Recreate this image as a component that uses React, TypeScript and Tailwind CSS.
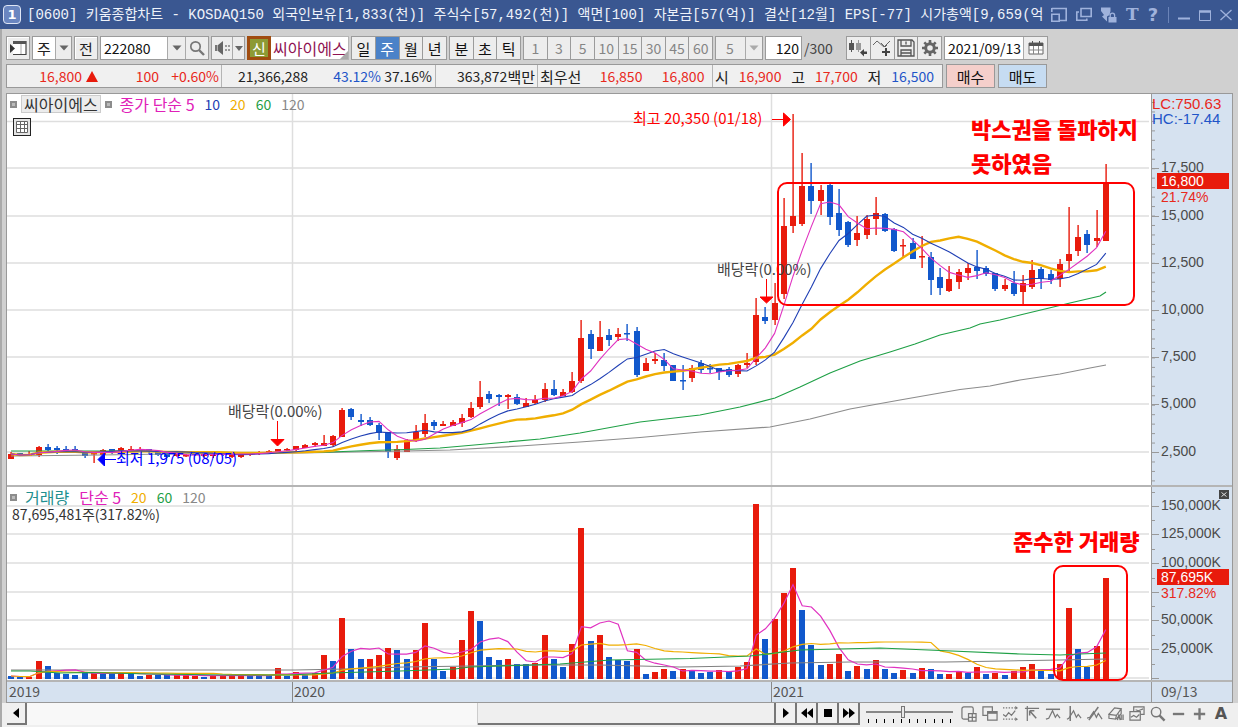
import React from "react";

type Tone = "r" | "b";
type Candle = [Tone, number, number, number, number];
type Bar = [Tone, number];

/* tone, high, body top, body bottom, low */
const candles: Candle[] = [
  ["r", 452, 454, 459, 459], ["b", 453, 453, 456, 456], ["r", 451, 454, 456, 456], ["r", 446, 447, 455, 457],
  ["b", 444, 447, 450, 452], ["b", 446, 448, 450, 454], ["b", 446, 449, 451, 452], ["b", 446, 449, 452, 453],
  ["b", 451, 451, 456, 458], ["r", 451, 453, 454, 463], ["r", 449, 450, 455, 455], ["b", 449, 449, 451, 454],
  ["r", 447, 448, 451, 452], ["r", 446, 449, 451, 452], ["r", 447, 449, 451, 452], ["b", 449, 449, 452, 454],
  ["b", 451, 451, 455, 456], ["b", 453, 453, 457, 458], ["r", 453, 454, 456, 457], ["r", 454, 455, 456, 457],
  ["b", 452, 453, 455, 456], ["r", 452, 453, 456, 457], ["r", 453, 454, 456, 458], ["b", 452, 453, 455, 456],
  ["r", 453, 454, 457, 458], ["r", 453, 454, 457, 458], ["r", 452, 453, 455, 456], ["r", 451, 452, 454, 455],
  ["r", 450, 451, 453, 454], ["r", 449, 449, 453, 453], ["r", 448, 449, 450, 451], ["r", 446, 446, 450, 452],
  ["r", 444, 445, 448, 448], ["r", 442, 443, 445, 447], ["r", 435, 443, 446, 446], ["r", 435, 436, 445, 447],
  ["r", 408, 410, 437, 437], ["b", 408, 409, 417, 420], ["b", 414, 420, 422, 426], ["b", 417, 420, 425, 426],
  ["b", 423, 425, 433, 440], ["b", 432, 432, 452, 458], ["r", 445, 449, 458, 460], ["r", 439, 440, 452, 452],
  ["r", 425, 432, 441, 442], ["r", 414, 423, 434, 437], ["b", 420, 422, 426, 430], ["r", 421, 424, 426, 426],
  ["r", 420, 422, 426, 426], ["r", 414, 418, 423, 427], ["r", 402, 408, 417, 418], ["r", 381, 397, 407, 409],
  ["b", 391, 394, 399, 403], ["b", 394, 395, 397, 406], ["r", 394, 395, 397, 409], ["b", 394, 397, 404, 405],
  ["r", 398, 403, 407, 407], ["r", 395, 400, 403, 404], ["r", 383, 389, 400, 402], ["b", 380, 389, 395, 396],
  ["r", 389, 392, 396, 396], ["r", 372, 381, 392, 393], ["r", 320, 338, 381, 383], ["b", 330, 334, 349, 359],
  ["r", 321, 337, 351, 351], ["b", 329, 335, 340, 346], ["r", 328, 334, 337, 341], ["b", 324, 333, 334, 341],
  ["b", 327, 331, 375, 377], ["r", 358, 363, 371, 371], ["r", 353, 359, 361, 364], ["b", 353, 360, 366, 371],
  ["b", 365, 365, 381, 381], ["b", 365, 380, 381, 390], ["r", 365, 368, 378, 382], ["b", 360, 363, 370, 373],
  ["b", 364, 368, 369, 373], ["b", 368, 368, 372, 380], ["b", 367, 369, 375, 377], ["r", 364, 365, 374, 377],
  ["r", 353, 363, 365, 368], ["r", 298, 315, 362, 365], ["b", 307, 317, 321, 324], ["r", 283, 303, 320, 325],
  ["r", 198, 226, 294, 299], ["r", 114, 216, 226, 233], ["r", 153, 186, 224, 226], ["b", 163, 186, 201, 214],
  ["r", 185, 190, 201, 215], ["b", 184, 185, 217, 225], ["b", 189, 213, 230, 236], ["b", 221, 222, 245, 247],
  ["r", 216, 233, 240, 246], ["r", 215, 219, 235, 239], ["r", 197, 213, 219, 235], ["b", 213, 214, 231, 232],
  ["b", 228, 229, 251, 252], ["r", 239, 245, 246, 258], ["b", 238, 243, 259, 259], ["r", 236, 256, 257, 268],
  ["b", 252, 257, 280, 295], ["b", 268, 277, 288, 295], ["r", 266, 279, 291, 292], ["r", 269, 272, 282, 289],
  ["r", 263, 268, 273, 280], ["b", 250, 267, 271, 279], ["b", 266, 268, 274, 276], ["b", 273, 273, 289, 291],
  ["r", 279, 285, 289, 291], ["b", 271, 283, 294, 296], ["r", 275, 283, 292, 304], ["r", 260, 270, 287, 289],
  ["b", 267, 269, 279, 289], ["b", 270, 274, 280, 284], ["r", 259, 264, 279, 287], ["r", 207, 254, 261, 272],
  ["r", 225, 237, 251, 256], ["b", 230, 234, 245, 253], ["r", 210, 238, 241, 247], ["r", 164, 182, 241, 241],
];

const bars: Bar[] = [
  ["b", 676], ["b", 677], ["r", 677], ["r", 661], ["b", 666], ["b", 673], ["b", 674], ["b", 675], ["b", 673], ["r", 672],
  ["b", 673], ["b", 674], ["r", 672], ["b", 673], ["b", 676], ["r", 675], ["b", 675], ["b", 675], ["r", 675], ["r", 675],
  ["r", 676], ["b", 677], ["r", 675], ["r", 675], ["r", 675], ["r", 676], ["b", 676], ["b", 676], ["b", 675], ["r", 668],
  ["b", 676], ["r", 672], ["b", 675], ["r", 673], ["r", 655], ["b", 661], ["r", 618], ["b", 649], ["b", 659], ["r", 659],
  ["r", 655], ["r", 648], ["b", 650], ["b", 659], ["r", 650], ["r", 623], ["b", 659], ["b", 671], ["r", 667], ["r", 640],
  ["r", 611], ["b", 621], ["b", 657], ["b", 660], ["r", 659], ["b", 664], ["b", 664], ["r", 663], ["r", 635], ["b", 659],
  ["b", 667], ["r", 644], ["r", 528], ["b", 641], ["r", 635], ["b", 657], ["b", 660], ["b", 661], ["r", 649], ["b", 674],
  ["r", 672], ["r", 669], ["b", 671], ["r", 669], ["b", 671], ["b", 673], ["b", 672], ["r", 670], ["b", 672], ["r", 667],
  ["r", 662], ["r", 504], ["b", 639], ["r", 619], ["r", 593], ["r", 568], ["b", 610], ["b", 645], ["b", 665], ["r", 664],
  ["r", 654], ["b", 671], ["r", 666], ["b", 669], ["r", 660], ["b", 669], ["b", 673], ["r", 670], ["b", 673], ["r", 668],
  ["b", 669], ["b", 674], ["r", 674], ["r", 672], ["b", 673], ["r", 667], ["b", 674], ["r", 673], ["b", 675], ["r", 671],
  ["r", 667], ["r", 664], ["b", 671], ["b", 674], ["r", 664], ["r", 608], ["b", 649], ["b", 667], ["r", 646], ["r", 578],
];

const STEP = 9.2;
const xAt = (i: number) => 11 + STEP * i;
const fillOf = (t: Tone) => (t === "r" ? "#e81b0c" : "#1158cc");

function average(values: number[], n: number) {
  return values
    .map((_, i) => {
      const part = values.slice(Math.max(0, i - n + 1), i + 1);
      const mean = part.reduce((a, b) => a + b, 0) / part.length;
      return `${xAt(i).toFixed(1)},${mean.toFixed(1)}`;
    })
    .join(" ");
}

const closes = candles.map(([t, , top, bottom]) => (t === "r" ? top : bottom));
const volumes = bars.map(([, top]) => top);

const priceTicks: [number, string][] = [
  [168, "17,500"], [216, "15,000"], [263, "12,500"], [310, "10,000"], [357, "7,500"], [404, "5,000"], [452, "2,500"],
];
const volumeTicks: [number, string][] = [
  [506, "150,000K"], [534, "125,000K"], [563, "100,000K"], [592, ""], [620, "50,000K"], [649, "25,000K"], [678, ""],
];

const UI = "font-['Noto_Sans_CJK_KR',sans-serif]";
const btn =
  "flex h-6 items-center justify-center border border-[#9b9b9b] bg-[#ededed] text-[15px] leading-none text-[#222] shadow-[inset_1px_1px_0_#fff]";

function Down({ dim = false }: { dim?: boolean }) {
  return (
    <svg viewBox="0 0 10 6" className={dim ? "h-1.5 w-2.5 fill-[#aaa]" : "h-1.5 w-2.5 fill-[#666]"} aria-hidden="true">
      <path d="M0.5 0.5h9L5 5.5z" />
    </svg>
  );
}

function Mark() {
  return <span className="block size-[7px] border-2 border-[#8c8c8c] bg-[#bbb]" />;
}

function TitleBar() {
  return (
    <header className="flex h-[29px] items-center bg-[#3a5791] pl-[3px] pr-1.5 text-[#eef2fa]">
      <span className="flex h-[19px] w-[18px] shrink-0 items-center justify-center rounded border border-[#dfe6f5] bg-[#6a86c0] font-['DejaVu_Sans',sans-serif] text-[13px] font-bold text-white">
        1
      </span>
      <h1 className="ml-1.5 min-w-0 flex-1 overflow-hidden whitespace-pre font-['Liberation_Mono','Noto_Sans_CJK_KR',monospace] text-sm leading-5">
        [0600] 키움종합차트 - KOSDAQ150 외국인보유[1,833(천)] 주식수[57,492(천)] 액면[100] 자본금[57(억)] 결산[12월] EPS[-77] 시가총액[9,659(억
      </h1>
      <div className="ml-1 flex shrink-0 items-center gap-[9px] text-[#9fb2dc]">
        <button aria-label="창 크기" className="size-4">
          <svg viewBox="0 0 16 16" fill="none" stroke="currentColor" strokeWidth="1.6"><path d="M.8 1.5h14.4v12H8.5M.8 1v4M.8 7.3h7.4v6.9H.8z" /></svg>
        </button>
        <button aria-label="창 복사" className="size-4">
          <svg viewBox="0 0 16 16" fill="none" stroke="currentColor" strokeWidth="1.6"><path d="M5 1.5h10.2v8H5zM3 5H.8v8.2h10v-1.8" /></svg>
        </button>
        <button aria-label="고정" className="size-4">
          <svg viewBox="0 0 16 16" fill="currentColor"><path d="M0 .5h9.500v3.500l-1 4L6 9.500v5L1 9.500l2-1.500L0 4z" /><path d="M7.500 10h8v5.500h-8z" /><path d="M9.200 10V8.300a2.200 2.200 0 0 1 4.400 0V10" fill="none" stroke="currentColor" strokeWidth="1.300" /></svg>
        </button>
        <button aria-label="글꼴" className="w-3 font-['DejaVu_Serif',serif] text-[17px] font-bold leading-none">T</button>
        <button aria-label="도움말" className="w-3 font-['DejaVu_Sans',sans-serif] text-lg font-bold leading-none">?</button>
        <span className="h-4 w-px bg-[#6b84b8]" />
        <button aria-label="최소화" className="size-3">
          <svg viewBox="0 0 12 12" fill="currentColor"><path d="M0 8.500h12v2H0z" /></svg>
        </button>
        <button aria-label="최대화" className="size-3">
          <svg viewBox="0 0 12 12" fill="none" stroke="currentColor"><path d="M.5 2.500h11v9H.5z" /><path d="M0 2.500h12" strokeWidth="2.500" /></svg>
        </button>
        <button aria-label="닫기" className="size-3">
          <svg viewBox="0 0 12 12" fill="none" stroke="currentColor" strokeWidth="1.300"><path d="M.5 1l11 10M11.500 1L.5 11" /></svg>
        </button>
      </div>
    </header>
  );
}

function Toolbar() {
  const periods = ["일", "주", "월", "년"];
  return (
    <div className="flex items-center gap-0.5">
      <button className={`${btn} w-6`} aria-label="패널">
        <svg viewBox="0 0 18 16" className="h-4 w-[18px]"><path d="M4 1.500h13v13H4" fill="#fff" stroke="#444" strokeWidth="1.200" /><path d="M4 1h13v3H4z" fill="#555" /><path d="M12 4v10" stroke="#aaa" /><path d="M1 4v9l5-4.500z" fill="#333" /></svg>
      </button>
      <label className="relative flex h-6 w-10 border border-[#9b9b9b] bg-white">
        <select aria-label="주기" className="h-full w-full appearance-none bg-transparent pl-1 text-[15px] leading-none text-[#222]">
          <option>주</option>
        </select>
        <span className="pointer-events-none absolute inset-y-0 right-0 flex w-4 items-center justify-center border-l border-[#aaa] bg-[#ededed]"><Down /></span>
      </label>
      <button className={`${btn} w-6`}>전</button>
      <div className="flex h-6 w-[109px] border border-[#9b9b9b] bg-white">
        <input aria-label="종목코드" defaultValue="222080" className="w-[66px] min-w-0 bg-transparent px-[3px] text-sm leading-none text-[#111]" />
        <button aria-label="종목 목록" className="flex w-[18px] items-center justify-center border-l border-[#aaa] bg-[#ededed]"><Down /></button>
        <button aria-label="검색" className="flex flex-1 items-center justify-center border-l border-[#aaa] bg-[#ededed]">
          <svg viewBox="0 0 16 16" className="size-4" fill="none" stroke="#777"><circle cx="6.500" cy="6.500" r="4.700" strokeWidth="1.700" /><path d="M10 10l5 5" strokeWidth="2.400" /></svg>
        </button>
      </div>
      <div className="flex h-6 w-[34px] border border-[#9b9b9b] bg-[#ededed]">
        <button aria-label="소리" className="flex flex-1 items-center justify-center">
          <svg viewBox="0 0 17 16" className="h-4 w-[17px]"><path d="M1 5h2.500v6H1z" fill="#777" /><path d="M4 5l5-4v14l-5-4z" fill="#666" /><path d="M11 5h2v2h-2zM14 5h2v2h-2zM11 9h2v2h-2zM14 9h2v2h-2z" fill="#999" /></svg>
        </button>
        <button aria-label="소리 설정" className="flex w-3 items-center justify-center border-l border-[#aaa]">
          <svg viewBox="0 0 8 5" className="h-[5px] w-2 fill-[#666]"><path d="M0 0h8L4 5z" /></svg>
        </button>
      </div>
      <div className="flex h-6 w-[102px] bg-white">
        <span className="flex w-6 items-center justify-center border-[3px] border-[#a04c10] bg-[#8d9a35] text-[15px] leading-none text-white">신</span>
        <span className="relative flex flex-1 items-center whitespace-nowrap border-y border-r border-[#b5b5b5] pl-0.5 text-[16px] leading-none text-[#8f1352]">
          씨아이에스
          <svg viewBox="0 0 8 8" className="absolute bottom-0 right-0 size-2 fill-[#aaa]"><path d="M8 0v8H0z" /></svg>
        </span>
      </div>
      <div className="flex w-24 divide-x divide-[#9b9b9b] border border-[#9b9b9b] bg-[#ededed]">
        {periods.map((p) => (
          <button
            key={p}
            className={p === "주" ? "h-[22px] flex-1 bg-[#4b82c8] text-[15px] leading-none text-white" : "h-[22px] flex-1 text-[15px] leading-none text-[#111]"}
          >
            {p}
          </button>
        ))}
      </div>
      <div className="flex w-[72px] divide-x divide-[#9b9b9b] border border-[#9b9b9b] bg-[#ededed]">
        {["분", "초", "틱"].map((p) => (
          <button key={p} className="h-[22px] flex-1 text-[15px] leading-none text-[#111]">{p}</button>
        ))}
      </div>
      <div className="flex w-[190px] divide-x divide-[#9b9b9b] border border-[#9b9b9b] bg-[#ededed]">
        {["1", "3", "5", "10", "15", "30", "45", "60"].map((p) => (
          <button key={p} className="h-[22px] flex-1 text-sm leading-none text-[#858585]">{p}</button>
        ))}
      </div>
      <label className="relative flex h-6 w-12 border border-[#9b9b9b] bg-[#ededed]">
        <select aria-label="분 단위" className="h-full w-full appearance-none bg-transparent pl-2.5 text-sm leading-none text-[#858585]">
          <option>5</option>
        </select>
        <span className="pointer-events-none absolute inset-y-0 right-0 flex w-[17px] items-center justify-center border-l border-[#aaa]"><Down dim /></span>
      </label>
      <input aria-label="봉 개수" defaultValue="120" className="h-6 w-[37px] border border-[#9b9b9b] bg-white px-0.5 text-right text-sm leading-none text-[#111]" />
      <span className="w-10 text-sm leading-none text-[#444]">/300</span>
      <div className="flex w-24 divide-x divide-[#9b9b9b] border border-[#9b9b9b] bg-[#ededed]">
        <button aria-label="차트 종류" className="flex h-[22px] flex-1 items-center justify-center">
          <svg viewBox="0 0 20 18" className="h-[18px] w-5"><path d="M1 4h5v7H1zM3 1h1v12H3z" fill="#555" /><path d="M8 4h5v7H8zM10 1h1v12h-1z" fill="#999" /><path d="M12 13.500l4-3.500v2.500h3v2.500h-3V17.500z" fill="#444" /></svg>
        </button>
        <button aria-label="지표 추가" className="flex h-[22px] flex-1 items-center justify-center">
          <svg viewBox="0 0 20 18" className="h-[18px] w-5"><path d="M1 6l4-4 7 6 6-6M9 4l4 4 2-2" fill="none" stroke="#666" /><path d="M13 9h2v3h3v2h-3v3h-2v-3h-3v-2h3z" fill="#444" /></svg>
        </button>
        <button aria-label="저장" className="flex h-[22px] flex-1 items-center justify-center">
          <svg viewBox="0 0 18 18" className="size-[18px]" fill="none" stroke="#555" strokeWidth="1.300"><path d="M1 1h14l2 2v14H1z" /><path d="M4 1v6h10V1M9 2.500v3M4 17v-6h10v6M4 14h10" /></svg>
        </button>
        <button aria-label="설정" className="flex h-[22px] flex-1 items-center justify-center">
          <svg viewBox="0 0 16 16" className="size-4"><circle cx="8" cy="8" r="4.300" fill="none" stroke="#666" strokeWidth="3" /><path d="M8 0v3M8 13v3M0 8h3M13 8h3M2.300 2.300l2 2M11.700 11.700l2 2M13.700 2.300l-2 2M4.300 11.700l-2 2" stroke="#666" strokeWidth="2.600" /></svg>
        </button>
      </div>
      <div className="flex h-6 w-[104px] border border-[#9b9b9b] bg-white">
        <input aria-label="기준일" defaultValue="2021/09/13" className="min-w-0 flex-1 bg-transparent pl-[3px] text-sm leading-none text-[#111]" />
        <button aria-label="달력" className="flex w-6 items-center justify-center border-l border-[#aaa] bg-[#ededed]">
          <svg viewBox="0 0 16 14" className="h-3.5 w-4"><path d="M1 2h14v11H1z" fill="#fff" stroke="#666" /><path d="M1 2h14v3H1zM4 0h1v3H4zM11 0h1v3h-1z" fill="#555" /><path d="M1 9h14M5.500 5v8M10.500 5v8" stroke="#888" /></svg>
        </button>
      </div>
    </div>
  );
}

function Quote() {
  const num = "text-sm leading-none text-right";
  return (
    <div className="flex h-6 gap-[3px] whitespace-nowrap leading-none">
      <div className="flex w-[937px] divide-x divide-[#b5b5b5] border border-[#999] bg-[#f0f0f0] text-[15px] leading-none text-[#222]">
        <div className="flex w-[215px] items-center text-[#e8291c]">
          <span className={`${num} w-[75px]`}>16,800</span>
          <svg viewBox="0 0 12 11" className="ml-1 h-[11px] w-3 fill-[#e81b0c]"><path d="M6 0l6 11H0z" /></svg>
          <span className={`${num} w-[61px]`}>100</span>
          <span className={`${num} w-[60px]`}>+0.60%</span>
        </div>
        <div className="flex w-[214px] items-center">
          <span className={`${num} w-[86px]`}>21,366,288</span>
          <span className={`${num} w-[73px] text-[#1f55c8]`}>43.12%</span>
          <span className={`${num} w-[51px]`}>37.16%</span>
        </div>
        <div className="flex w-[102px] items-center justify-end pr-0.5">
          <span className="text-sm leading-none">363,872</span>백만
        </div>
        <div className="flex w-[175px] items-center pl-0.5">
          최우선
          <span className={`${num} w-[61px] text-[#e8291c]`}>16,850</span>
          <span className={`${num} w-[62px] text-[#e8291c]`}>16,800</span>
        </div>
        <div className="flex flex-1 items-center justify-between pl-0.5 pr-2">
          시<span className="text-sm leading-none text-[#e8291c]">16,900</span>
          고<span className="text-sm leading-none text-[#e8291c]">17,700</span>
          저<span className="text-sm leading-none text-[#1f55c8]">16,500</span>
        </div>
      </div>
      <button className="w-[49px] border border-[#999] bg-[#f5cfcb] text-[15px] text-[#111]">매수</button>
      <button className="w-[49px] border border-[#999] bg-[#c6dcf2] text-[15px] text-[#111]">매도</button>
    </div>
  );
}

function PriceChart() {
  return (
    <div className="relative min-w-0 flex-1">
      <svg viewBox="7 94 1144 391" className="block w-full" role="img" aria-label="주가 차트">
        <g stroke="#dedede" strokeWidth="1.500">
          {[121.500, ...priceTicks.map((t) => t[0])].map((y) => (
            <path key={y} d={`M7 ${y}H1149`} />
          ))}
          <path d="M292.500 94V485M771.500 94V485" />
        </g>
        {candles.map(([t, hi, top, bottom, lo], i) => (
          <g key={i} fill={fillOf(t)}>
            <rect x={Math.round(xAt(i)) - 0.6} y={hi} width="1.4" height={lo - hi} />
            <rect x={Math.round(xAt(i)) - 3} y={top} width="6" height={Math.max(1.500, bottom - top)} />
          </g>
        ))}
        <g fill="none">
          <polyline points="11,456 100,455 200,453.5 300,453 405,451 450,450 520,446 580,442 640,437.5 700,432 770,427 810,419 850,409 900,400 940,393 960,389.5 990,386 1020,380 1060,374 1090,368 1106,365" stroke="#8c8c8c" strokeWidth="1.200" />
          <polyline points="11,451 66,451 130,451 200,452 260,453 330,452 370,450.5 405,449.5 440,448 480,444.5 540,439 580,433 640,422 700,415 740,407 775,398 800,387 830,373 860,361 890,352 915,344 940,335 970,328 980,324 1000,320 1020,315 1045,309 1070,303 1100,296 1106,292" stroke="#1fa046" strokeWidth="1.200" />
          <polyline points={average(closes, 20)} stroke="#f0ae00" strokeWidth="2.400" />
          <polyline points={average(closes, 10)} stroke="#1f3fb4" strokeWidth="1.100" />
          <polyline points={average(closes, 5)} stroke="#e032c0" strokeWidth="1.100" />
        </g>
        <g className="text-[15px]">
          <text x="633" y="124" fill="#f00">최고 20,350 (01/18)</text>
          <text x="717" y="275" fill="#444">배당락(0.00%)</text>
          <text x="228" y="417" fill="#444">배당락(0.00%)</text>
          <text x="116" y="464" fill="#00f">최저 1,975 (08/05)</text>
        </g>
        <g fill="#f00" stroke="#f00">
          <path d="M772 119.500h12" /><path d="M783.500 113v13l7-6.500z" />
          <path d="M766.500 279v19" /><path d="M760 297h13l-6.500 6z" />
          <path d="M277.500 421v18" /><path d="M271 439.500h13l-6.500 6.500z" />
        </g>
        <g fill="#00f" stroke="#00f"><path d="M104 459.500h12" /><path d="M104.500 453v13l-6.500-6.500z" /></g>
        <rect x="778" y="183" width="356" height="122" rx="9" fill="none" stroke="#f00" strokeWidth="2" />
        <g fill="#f00" className="text-[22px] font-black">
          <text x="971" y="138">박스권을 돌파하지</text>
          <text x="971" y="172">못하였음</text>
        </g>
      </svg>
      <div className="absolute left-[3px] top-px text-[16px] leading-none">
        <div className="flex h-[18px] items-center gap-1">
          <Mark />
          <button className="h-[18px] border border-[#ccc] bg-[#ececec] px-0.5 leading-none text-[#333]">씨아이에스</button>
          <Mark />
          <span className="ml-1 text-[#e020b8]">종가 단순 5</span>
          <div className="ml-1.5 flex gap-2.5 text-sm leading-none">
            <span className="text-[#1f3fb4]">10</span>
            <span className="text-[#f0ae00]">20</span>
            <span className="text-[#1fa046]">60</span>
            <span className="text-[#888]">120</span>
          </div>
        </div>
        <button aria-label="표" className="ml-[3px] mt-[5px] flex size-[18px] items-center justify-center border border-[#222] bg-[#e4e4e4]">
          <svg viewBox="0 0 12 12" className="size-3" fill="#fff" stroke="#666"><path d="M.5.5h11v11H.5zM4.500.5v11M8.500.5v11M.5 3.500h11M.5 7.500h11" /></svg>
        </button>
      </div>
    </div>
  );
}

function VolumeChart() {
  return (
    <div className="relative min-w-0 flex-1">
      <svg viewBox="7 487 1144 193" className="relative z-10 block w-full overflow-visible" role="img" aria-label="거래량 차트">
        <g stroke="#dedede" strokeWidth="1.500">
          {volumeTicks.map(([y]) => (
            <path key={y} d={`M7 ${y}H1149`} />
          ))}
          <path d="M292.500 487V680M771.500 487V680" />
        </g>
        {bars.map(([t, top], i) => (
          <rect key={i} x={Math.round(xAt(i)) - 3} y={top} width="6" height={679 - top} fill={fillOf(t)} />
        ))}
        <g fill="none" strokeWidth="1.200">
          <polyline points="11,670 295,670 345,669 405,667 470,666 540,665 600,665 680,667 740,666 790,663 850,662 945,662 1060,660 1106,659" stroke="#808080" />
          <polyline points={average(volumes, 5)} stroke="#e032c0" />
          <polyline points={average(volumes, 20)} stroke="#f0ae00" />
          <polyline points="11,671 30,671 60,673 90,672.5 150,674 230,675 290,675 330,673 400,671 455,669 470,667 560,664 610,660 690,658.5 750,656 800,650 880,648 940,650.5 1020,654 1060,655 1080,654 1106,653" stroke="#1fa046" />
        </g>
        <rect x="1054" y="566" width="73" height="114" rx="9" fill="none" stroke="#f00" strokeWidth="2" />
        <text x="1013" y="550" fill="#f00" className="text-[22px] font-black">준수한 거래량</text>
      </svg>
      <div className="absolute left-[3px] top-0.5 leading-none">
        <div className="flex h-4 items-center gap-2.5 text-sm leading-none">
          <div className="flex items-center gap-2 text-[16px] leading-none">
            <Mark />
            <span className="text-[#1f9090]">거래량</span>
            <span className="ml-0.5 text-[#e020b8]">단순 5</span>
          </div>
          <span className="text-[#f0ae00]">20</span>
          <span className="text-[#1fa046]">60</span>
          <span className="text-[#888]">120</span>
        </div>
        <p className="ml-0.5 mt-0.5 text-sm leading-none text-[#333]">87,695,481주(317.82%)</p>
      </div>
    </div>
  );
}

const axisText = "font-['Liberation_Sans',sans-serif] text-sm";

function PriceAxis() {
  const minor = Array.from({ length: 41 }, (_, i) => 102.500 + i * 9.460).filter((y) => y < 484);
  return (
    <svg viewBox="1151 94 81 391" className={`block w-[81px] shrink-0 bg-[#d6e2f0] ${axisText}`} role="img" aria-label="가격 축">
      <path d="M1151.500 94V485" stroke="#999" />
      <g stroke="#999">
        {minor.map((y) => <path key={y} d={`M1152 ${y}h3`} />)}
        {priceTicks.map(([y]) => <path key={y} d={`M1152 ${y}.5h7`} />)}
      </g>
      <g fill="#4a4a4a">
        {priceTicks.map(([y, label]) => <text key={y} x="1161" y={y + 4}>{label}</text>)}
      </g>
      <g className="text-[15px]">
        <text x="1152" y="109" fill="#e8291c">LC:750.63</text>
        <text x="1152" y="124" fill="#1f55c8">HC:-17.44</text>
      </g>
      <rect x="1157" y="173" width="72" height="16" fill="#e81b0c" />
      <text x="1161" y="186" fill="#fff">16,800</text>
      <text x="1161" y="202" fill="#e8291c">21.74%</text>
    </svg>
  );
}

function VolumeAxis() {
  return (
    <svg viewBox="1151 487 81 193" className={`block w-[81px] shrink-0 bg-[#d6e2f0] ${axisText}`} role="img" aria-label="거래량 축">
      <path d="M1151.500 487V680" stroke="#999" />
      <g stroke="#999">
        {volumeTicks.map(([y]) => <path key={y} d={`M1152 ${y}.5h7M1152 ${y - 14}.5h3`} />)}
      </g>
      <g fill="#4a4a4a">
        {volumeTicks.map(([y, label]) => <text key={y} x="1161" y={y + 4}>{label}</text>)}
      </g>
      <rect x="1157" y="569" width="72" height="16" fill="#e81b0c" />
      <text x="1161" y="582" fill="#fff">87,695K</text>
      <text x="1161" y="598" fill="#e8291c">317.82%</text>
      <path d="M1219 490h10v9h-10z" fill="#444" /><path d="M1221.500 492.500l5 4M1226.500 492.500l-5 4" stroke="#ddd" />
    </svg>
  );
}

const tools: [string, React.ReactNode][] = [
  ["새 창", <><rect x="1" y="1" width="12" height="13" rx="2" /><path d="M8 8h8v8H8z" fill="#f0f0f0" /><path d="M12 8v8M8 12h8" /></>],
  ["겹치기", <><path d="M1 1h10v9H1z" /><path d="M6 6h10v9H6z" fill="#eee" /><path d="M6 7.300h10" strokeWidth="2" /></>],
  ["범위", <><path d="M0 2h13M0 14h13" strokeDasharray="1.500 1.500" /><path d="M0 9l3 2 3-4 3 3 4-5" /><path d="M13 0l3 2-3 2zM13 12l3 2-3 2z" fill="#777" stroke="none" /></>],
  ["추세선", <><path d="M1 2.500h15M3.500 0v16" /><path d="M6 5l7 8M6 5h5M6 5v5" strokeWidth="1.600" /></>],
  ["수평선", <><path d="M1 3.500h15" strokeWidth="1.600" /><path d="M1 14l3-1 4-8 3 7 2-3 3 4" /></>],
  ["수직선", <><path d="M4.500 0v16" strokeWidth="1.600" /><path d="M1 14l2-1 5-8 3 7 2-3 3 4" /></>],
  ["사선", <><path d="M2 15L12 1" strokeWidth="1.600" /><path d="M0 13l3-1 4-6 3 6 2-4 4 6" /></>],
  ["모두 지우기", <><path d="M1 9l6-7 7 1-5 7zM1 9v4l7 1 1-4zM9 14l5-6V3" /><path d="M10 15l1.500-5 1.500 5M14 9v6M16 9v6" strokeWidth="1.400" /></>],
  ["차트 겹침", <><path d="M5 1h11v8H5z" /><path d="M1 6h11v9H1z" fill="#f0f0f0" /><path d="M2 12l3-2 3 2 3-3M7 4l3 1 5-2" /></>],
  ["돋보기", <><circle cx="6.500" cy="6.500" r="5" strokeWidth="1.500" /><path d="M10 10l5.500 5.500" strokeWidth="2.600" /></>],
  ["축소", <path d="M2 8.500h12" strokeWidth="2.500" />],
  ["확대", <path d="M2 8.500h12M8 2.500v12" strokeWidth="2.500" />],
];

function BottomBar() {
  const step = "flex w-[21px] items-center justify-center border-b-2 border-r-2 border-[#777] bg-[#f0f0f0]";
  return (
    <footer className="flex h-6 items-center pb-0.5 pl-px">
      <div className="flex h-full min-w-0 flex-1">
        <button aria-label="왼쪽" className="flex w-5 items-center justify-center border-b-2 border-r-2 border-[#777] bg-[#f0f0f0]">
          <svg viewBox="0 0 6 10" className="h-2.5 w-1.5"><path d="M6 0v10L0 5z" /></svg>
        </button>
        <div className="flex min-w-0 flex-1 justify-end bg-[#f8f8f8]">
          <div className="w-[298px] border-b-2 border-r-2 border-[#777] bg-[#efefef] shadow-[-1px_0_0_#ccc]" />
        </div>
      </div>
      <div className="flex h-full">
        <button aria-label="재생" className={step}><svg viewBox="0 0 6 10" className="h-2.5 w-1.5"><path d="M0 0v10l6-5z" /></svg></button>
        <button aria-label="뒤로" className={step}><svg viewBox="0 0 12 10" className="h-2.5 w-3"><path d="M6 0v10L0 5zM12 0v10L6 5z" /></svg></button>
        <button aria-label="정지" className={step}><svg viewBox="0 0 8 8" className="size-2"><path d="M0 0h8v8H0z" /></svg></button>
        <button aria-label="앞으로" className={step}><svg viewBox="0 0 12 10" className="h-2.5 w-3"><path d="M0 0v10l6-5zM6 0v10l6-5z" /></svg></button>
      </div>
      <div className="ml-1.5 w-[87px]">
        <input
          type="range"
          aria-label="재생 속도"
          defaultValue={42}
          className="block h-3.5 w-full appearance-none bg-[linear-gradient(#888,#888)] bg-[length:100%_2px] bg-center bg-no-repeat [&::-webkit-slider-thumb]:h-3 [&::-webkit-slider-thumb]:w-1 [&::-webkit-slider-thumb]:appearance-none [&::-webkit-slider-thumb]:border [&::-webkit-slider-thumb]:border-[#777] [&::-webkit-slider-thumb]:bg-[#e8e8e8]"
        />
        <div className="flex justify-between px-0.5">
          {Array.from({ length: 11 }, (_, i) => <span key={i} className="h-1 w-px bg-black" />)}
        </div>
      </div>
      <div className="ml-2 flex items-center gap-[5px] pr-1">
        {tools.map(([name, art]) => (
          <button key={name} aria-label={name} className="size-4">
            <svg viewBox="0 0 17 17" className="size-full" fill="none" stroke="#777" strokeWidth="1.300">{art}</svg>
          </button>
        ))}
        <button aria-label="자동" className="w-4 font-['DejaVu_Sans',sans-serif] text-base font-bold leading-none text-[#555]">A</button>
      </div>
    </footer>
  );
}

export default function App() {
  return (
    <div className={`${UI} min-w-[1238px] bg-[#efefef]`}>
      <TitleBar />
      <main className="border-l-2 border-[#aaa] bg-[#d0d0d0] pl-1 pr-[5px] pt-[7px]">
        <Toolbar />
        <div className="mt-1"><Quote /></div>
        <section className="mt-[5px] border border-[#999] bg-white">
          <div className="flex border-b-2 border-[#b5b5b5]"><PriceChart /><PriceAxis /></div>
          <div className="flex border-b-2 border-[#b5b5b5]"><VolumeChart /><VolumeAxis /></div>
          <div className="flex h-5 bg-[#d6e2f0] text-sm leading-none text-[#555]">
            <span className="w-[285px] pl-0.5 pt-0.5">2019</span>
            <span className="w-[479px] border-l border-[#888] pl-px pt-0.5">2020</span>
            <span className="flex-1 border-l border-[#888] pl-px pt-0.5">2021</span>
            <span className="w-[81px] border-l border-[#999] pl-[9px] pt-0.5">09/13</span>
          </div>
        </section>
        <div className="-ml-1 -mr-[5px] bg-[#efefef] pl-1 pr-[5px]"><BottomBar /></div>
      </main>
    </div>
  );
}
